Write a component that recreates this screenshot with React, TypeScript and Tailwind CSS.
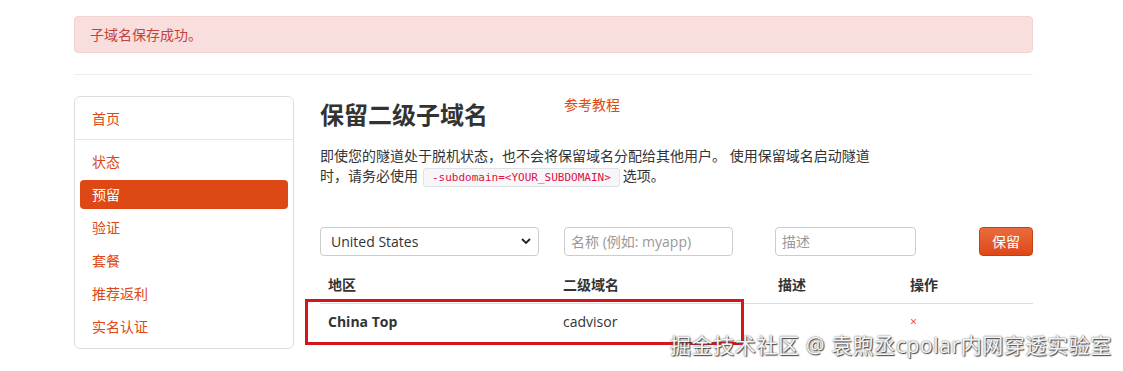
import React from 'react';

const NAV = ['状态', '预留', '验证', '套餐', '推荐返利', '实名认证'];

const App: React.FC = () => {
  return (
    <div
      className="relative w-[1123px] h-[371px] bg-white overflow-hidden text-[14px] text-[#333]"
      style={{ fontFamily: '"Open Sans", "Noto Sans CJK SC", sans-serif' }}
    >
      <div className="ml-[74px] w-[959px] pt-[16px]">
        {/* Success alert */}
        <div className="h-[37px] flex items-center px-[15px] rounded-[4px] bg-[#f9dede] border border-[#f3d2d2] text-[#c4423c]">
          子域名保存成功。
        </div>

        <div className="mt-[21px] border-t border-[#eeeeee]" />

        <div className="flex mt-[21px]">
          {/* Sidebar */}
          <div className="w-[220px] h-[253px] shrink-0 rounded-[6px] border border-[#dddddd] pt-[5px] px-[5px]">
            <div className="h-[32px] flex items-center px-[12px] text-[#dd4814]">首页</div>
            <div className="-mx-[5px] border-t border-[#e5e5e5] mt-[5px] mb-[5px]" />
            {NAV.map((n) =>
              n === '预留' ? (
                <div
                  key={n}
                  className="h-[29px] my-[2px] flex items-center px-[12px] rounded-[4px] bg-[#dd4814] text-white"
                >
                  {n}
                </div>
              ) : (
                <div key={n} className="h-[33px] flex items-center px-[12px] text-[#dd4814]">
                  {n}
                </div>
              )
            )}
          </div>

          {/* Main */}
          <div className="ml-[26px] flex-1">
            <div className="flex items-start">
              <h1 className="text-[24px] font-bold text-[#333] leading-[36px] mt-[1px] w-[244px]">
                保留二级子域名
              </h1>
              <a className="text-[#dd4814] text-[14px] leading-[18px]">参考教程</a>
            </div>

            <p className="mt-[13px] w-[560px] leading-[20px] text-[#333]">
              即使您的隧道处于脱机状态，也不会将保留域名分配给其他用户。 使用保留域名启动隧道时，请务必使用
              <code
                className="inline-block align-middle h-[19px] leading-[17px] ml-[5px] mr-[3px] px-[8px] rounded-[3px] bg-[#f7f7f9] border border-[#e1e1e8] text-[#d14] text-[11px]"
                style={{ fontFamily: '"DejaVu Sans Mono", monospace' }}
              >
                -subdomain=&lt;YOUR_SUBDOMAIN&gt;
              </code>
              选项。
            </p>

            {/* Form row */}
            <div className="flex items-center mt-[40px]">
              <div className="w-[219px] h-[29px] rounded-[4px] border border-[#cccccc] flex items-center justify-between pl-[10px] pr-[6px] text-[#333]">
                <span>United States</span>
                <svg width="12" height="12" viewBox="0 0 12 12">
                  <path d="M2 4 L6 8 L10 4" fill="none" stroke="#222" strokeWidth="1.8" />
                </svg>
              </div>
              <div className="ml-[25px] w-[169px] h-[29px] rounded-[4px] border border-[#cccccc] flex items-center px-[6px] text-[#999]">
                名称 (例如: myapp)
              </div>
              <div className="ml-[42px] w-[141px] h-[29px] rounded-[4px] border border-[#cccccc] flex items-center px-[6px] text-[#999]">
                描述
              </div>
              <button className="ml-[63px] w-[54px] h-[29px] rounded-[4px] text-white bg-gradient-to-b from-[#eb6b3d] to-[#dd4814] border border-[#c93e0e]">
                保留
              </button>
            </div>

            {/* Table */}
            <div className="mt-[11px]">
              <div className="flex h-[37px] items-center font-bold border-b border-[#dddddd]">
                <div className="w-[235px] pl-[8px]">地区</div>
                <div className="w-[215px] pl-[8px]">二级域名</div>
                <div className="w-[132px] pl-[8px]">描述</div>
                <div className="pl-[8px]">操作</div>
              </div>
              <div className="flex h-[36px] items-center">
                <div className="w-[235px] pl-[8px] font-bold">China Top</div>
                <div className="w-[215px] pl-[8px]">cadvisor</div>
                <div className="w-[132px] pl-[8px]"></div>
                <div className="pl-[8px] text-[#dd4814] text-[12px]">×</div>
              </div>
            </div>
          </div>
        </div>
      </div>

      {/* Annotation box */}
      <div className="absolute left-[305px] top-[299px] w-[439px] h-[46px] border-[3px] border-[#d4161c]" />

      {/* Watermark */}
      <div
        className="absolute left-[670px] top-[330px] text-[21px] leading-[30px] tracking-[0.6px] text-[#f4f4f4] whitespace-nowrap"
        style={{ textShadow: '0 0 2px #555, 1px 1px 1px #444' }}
      >
        掘金技术社区 @ 袁煦丞cpolar内网穿透实验室
      </div>
    </div>
  );
};

export default App;
